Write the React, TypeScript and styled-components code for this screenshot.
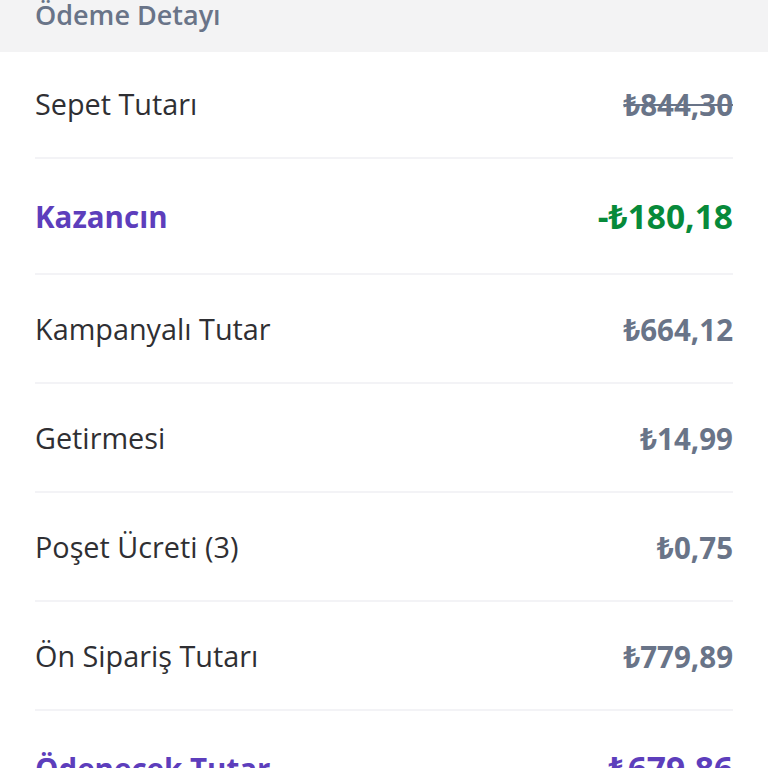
import React from "react";
import styled, { createGlobalStyle } from "styled-components";

const GlobalStyle = createGlobalStyle`
    html, body {
        margin: 0;
        padding: 0;
        background: #ffffff;
        font-family: "Open Sans", "Noto Sans", sans-serif;
    }
    #root {
        height: 768px;
        overflow: hidden;
    }
`;

type Tone = "default" | "purple" | "green";

const colors: Record<Tone, { label: string; value: string }> = {
    default: { label: "#2f2f33", value: "#697488" },
    purple: { label: "#5d3ebc", value: "#5d3ebc" },
    green: { label: "#5d3ebc", value: "#078a3a" },
};

const Header = styled.header`
    height: 52px;
    box-sizing: border-box;
    background: #f3f3f4;
    padding: 0 35px;
    overflow: hidden;
`;

const Title = styled.h2`
    margin: 0;
    margin-top: 1px;
    font-size: 27px;
    line-height: 27px;
    font-weight: 600;
    color: #697488;
`;

const List = styled.ul`
    list-style: none;
    margin: 0;
    padding: 0 35px;
`;

const Row = styled.li<{ $big?: boolean; $first?: boolean }>`
    display: flex;
    align-items: center;
    justify-content: space-between;
    padding: ${(p) => (p.$first ? "36px 0 36px" : p.$big ? "39px 0 37px" : "38px 0 36px")};
    height: ${(p) => (p.$big ? "38px" : "33px")};
    border-bottom: 2px solid #f3f3f6;
`;

const Label = styled.span<{ $tone: Tone; $strong?: boolean }>`
    font-size: ${(p) => (p.$strong ? "29.5px" : "28.8px")};
    line-height: 1;
    font-weight: ${(p) => (p.$strong ? 700 : 500)};
    color: ${(p) => colors[p.$tone].label};
`;

const Value = styled.span<{ $tone: Tone; $big?: boolean; $struck?: boolean }>`
    font-size: ${(p) => (p.$big ? "33.5px" : "29.5px")};
    line-height: 1;
    font-weight: 700;
    color: ${(p) => colors[p.$tone].value};
    text-decoration: ${(p) => (p.$struck ? "line-through" : "none")};
    text-decoration-thickness: 2px;
`;

const items: {
    label: string;
    value: string;
    tone: Tone;
    strong?: boolean;
    big?: boolean;
    struck?: boolean;
}[] = [
    { label: "Sepet Tutarı", value: "₺844,30", tone: "default", struck: true },
    { label: "Kazancın", value: "-₺180,18", tone: "green", strong: true, big: true },
    { label: "Kampanyalı Tutar", value: "₺664,12", tone: "default" },
    { label: "Getirmesi", value: "₺14,99", tone: "default" },
    { label: "Poşet Ücreti (3)", value: "₺0,75", tone: "default" },
    { label: "Ön Sipariş Tutarı", value: "₺779,89", tone: "default" },
    { label: "Ödenecek Tutar", value: "₺679,86", tone: "purple", strong: true, big: true },
];

export default function App() {
    return (
        <>
            <GlobalStyle />
            <Header>
                <Title>Ödeme Detayı</Title>
            </Header>
            <List>
                {items.map((item, i) => (
                    <Row key={item.label} $big={item.big} $first={i === 0}>
                        <Label $tone={item.tone} $strong={item.strong}>
                            {item.label}
                        </Label>
                        <Value $tone={item.tone} $big={item.big} $struck={item.struck}>
                            {item.value}
                        </Value>
                    </Row>
                ))}
            </List>
        </>
    );
}
